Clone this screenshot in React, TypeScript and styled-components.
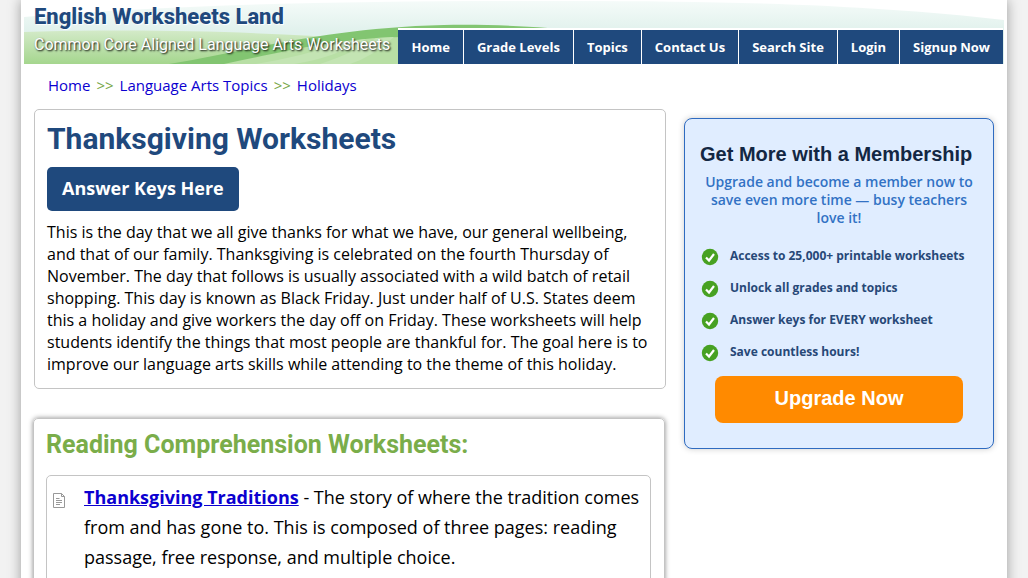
import React from "react";
import styled, { createGlobalStyle } from "styled-components";

const GlobalStyle = createGlobalStyle`
  *, *::before, *::after { box-sizing: border-box; }
  body {
    margin: 0;
    background: #f2f2f2;
    color: #000;
    font-family: "Open Sans", "Noto Sans", sans-serif;
    font-size: 16px;
  }
  h1, h2, h3, p, ul, ol { margin: 0; padding: 0; }
  ul, ol { list-style: none; }
`;

const Page = styled.div`
  margin: 0 21px;
  padding: 0 3px 40px;
  min-height: 100vh;
  background: #fff;
  box-shadow: 0 0 12px rgba(0, 0, 0, 0.36);
`;

const Header = styled.header`
  position: relative;
  display: flex;
  justify-content: space-between;
  height: 64px;
  overflow: hidden;
`;

const HeaderArt = styled.svg`
  position: absolute;
  inset: 0;
  width: 100%;
  height: 64px;
`;

const Brand = styled.div`
  position: relative;
  padding: 3px 0 0 10px;
  font-family: Roboto, sans-serif;
  white-space: nowrap;
`;

const SiteName = styled.div`
  color: #1f497d;
  font-size: 22px;
  font-weight: 800;
  line-height: 28px;
  text-shadow: 1px 1px 1px #fff;
`;

const Tagline = styled.div`
  color: #fff;
  font-size: 16px;
  line-height: 28px;
  text-shadow: 1px 1px 2px #000;
`;

const Nav = styled.nav`
  position: relative;
  align-self: flex-end;
  margin-right: 1px;
  border-top: 2px solid #fff;
  background: #fff;
`;

const NavList = styled.ul`
  display: flex;
  gap: 1px;
`;

const NavLink = styled.a`
  display: block;
  padding: 0 13px;
  background: #1f497d;
  color: #fff;
  font-size: 13px;
  font-weight: 700;
  line-height: 34px;
  text-decoration: none;
  white-space: nowrap;
`;

const Breadcrumb = styled.nav`
  display: flex;
  gap: 6px;
  padding: 10px 24px 12px;
  color: #76a646;
  font-size: 15px;
  line-height: 22px;
`;

const CrumbLink = styled.a`
  color: #0b00d0;
  text-decoration: none;
`;

const Columns = styled.div`
  display: grid;
  grid-template-columns: minmax(0, 1fr) 310px;
  align-items: start;
  gap: 18px;
  padding: 1px 10px 0;
`;

const Main = styled.main`
  display: grid;
  gap: 29px;
`;

const Card = styled.section<{ $raised?: boolean }>`
  margin: ${(p) => (p.$raised ? "0 1px 0 -1px" : "0")};
  padding: ${(p) => (p.$raised ? "9px 13px 14px 12px" : "12px 12px 13px")};
  border: 1px solid #c4c4c4;
  border-radius: 5px;
  box-shadow: ${(p) => (p.$raised ? "0 0 5px rgba(0, 0, 0, 0.45)" : "none")};
`;

const Title = styled.h1`
  color: #1f497d;
  font-family: Roboto, sans-serif;
  font-size: 30px;
  line-height: 34px;
`;

const KeysButton = styled.button`
  display: block;
  margin: 11px 0 10px;
  padding: 0 15px 2px;
  border: 0;
  border-radius: 5px;
  background: #1f497d;
  color: #fff;
  font: 700 18px/42px "Open Sans", sans-serif;
  cursor: pointer;
`;

const Intro = styled.p`
  line-height: 22px;
`;

const SectionTitle = styled.h2`
  color: #7aad4a;
  font-family: Roboto, sans-serif;
  font-size: 25px;
  line-height: 34px;
`;

const Worksheets = styled.ul`
  margin-top: 13px;
`;

const Worksheet = styled.li`
  display: flex;
  gap: 19px;
  padding: 6px 8px 12px 6px;
  border: 1px solid #c4c4c4;
  border-radius: 5px;
  font-size: 18px;
  line-height: 30px;

  svg {
    flex: none;
    margin-top: 11px;
  }
`;

const WorksheetLink = styled.a`
  color: #0b00d0;
  font-weight: 700;
`;

const Membership = styled.aside`
  margin-top: 9px;
  padding: 21px 15px 25px;
  border: 1px solid #2f6bc0;
  border-radius: 8px;
  background: #e0edff;
  box-shadow: 0 0 6px rgba(0, 0, 0, 0.2);
`;

const MembershipTitle = styled.h2`
  color: #132743;
  font: 700 20px/28px "Liberation Sans", Arial, sans-serif;
  white-space: nowrap;
`;

const MembershipText = styled.p`
  margin: 5px 0 13px;
  color: #3272c4;
  font-size: 14px;
  font-weight: 600;
  line-height: 18px;
  text-align: center;
`;

const Benefit = styled.li`
  display: flex;
  gap: 11px;
  padding-left: 1px;
  color: #274877;
  font-size: 12px;
  font-weight: 700;
  line-height: 32px;

  svg {
    flex: none;
    margin-top: 8px;
  }
`;

const UpgradeButton = styled.button`
  display: block;
  width: 248px;
  margin: 8px auto 0;
  padding: 0 0 3px;
  border: 0;
  border-radius: 8px;
  background: #ff8a00;
  color: #fff;
  font: 700 20px/44px "Liberation Sans", Arial, sans-serif;
  cursor: pointer;
`;

const navItems = ["Home", "Grade Levels", "Topics", "Contact Us", "Search Site", "Login", "Signup Now"];
const benefits = [
  "Access to 25,000+ printable worksheets",
  "Unlock all grades and topics",
  "Answer keys for EVERY worksheet",
  "Save countless hours!",
];

const Waves = () => (
  <HeaderArt viewBox="0 0 980 64" preserveAspectRatio="none" aria-hidden="true">
    <defs>
      <linearGradient id="mist" x1="0" y1="0" x2="0" y2="1">
        <stop offset="0" stopColor="#f5fbf9" />
        <stop offset="0.5" stopColor="#e0f1ec" />
      </linearGradient>
      <linearGradient id="meadow" x1="0" y1="0" x2="0" y2="1">
        <stop offset="0" stopColor="#d3eac8" />
        <stop offset="1" stopColor="#a5d68e" />
      </linearGradient>
    </defs>
    <path d="M0 17C150 5 300 1 500 1C700 0 850 5 980 20V64H0Z" fill="url(#mist)" />
    <path d="M0 32C110 29 200 31 290 36L380 40V64H0Z" fill="url(#meadow)" />
    <path d="M145 64C230 50 300 28 420 25C470 24 520 27 560 31V64Z" fill="#82c571" />
    <path d="M200 64C260 52 310 38 380 37V64Z" fill="#b8dfa5" />
    <path
      d="M232 64Q280 56 320 42L342 39Q310 58 270 64ZM296 64Q332 52 352 38L370 37Q348 57 326 64Z"
      fill="#c3e4b3"
    />
  </HeaderArt>
);

const PageIcon = () => (
  <svg width="12" height="15" viewBox="0 0 12 15" fill="none" stroke="#999" aria-hidden="true">
    <path d="M.5.5H8.5L11.5 3.5V14.5H.5ZM8.5.5V3.5H11.5M3 5.5H6.5M3 7.5H9M3 9.5H9M3 11.5H7" />
  </svg>
);

const CheckIcon = () => (
  <svg width="18" height="18" viewBox="0 0 18 18" aria-hidden="true">
    <circle cx="9" cy="9" r="8.2" fill="#47a122" />
    <path d="M5 9.5L8 12.5L13 6" fill="none" stroke="#fff" strokeWidth="2.2" />
  </svg>
);

export default function App() {
  return (
    <>
      <GlobalStyle />
      <Page>
        <Header>
          <Waves />
          <Brand>
            <SiteName>English Worksheets Land</SiteName>
            <Tagline>Common Core Aligned Language Arts Worksheets</Tagline>
          </Brand>
          <Nav aria-label="Main">
            <NavList>
              {navItems.map((item) => (
                <li key={item}>
                  <NavLink href="#">{item}</NavLink>
                </li>
              ))}
            </NavList>
          </Nav>
        </Header>
        <Breadcrumb aria-label="Breadcrumb">
          <CrumbLink href="#">Home</CrumbLink>
          <span>&gt;&gt;</span>
          <CrumbLink href="#">Language Arts Topics</CrumbLink>
          <span>&gt;&gt;</span>
          <CrumbLink href="#">Holidays</CrumbLink>
        </Breadcrumb>
        <Columns>
          <Main>
            <Card>
              <Title>Thanksgiving Worksheets</Title>
              <KeysButton type="button">Answer Keys Here</KeysButton>
              <Intro>
                This is the day that we all give thanks for what we have, our general wellbeing, and that of our
                family. Thanksgiving is celebrated on the fourth Thursday of November. The day that follows is usually
                associated with a wild batch of retail shopping. This day is known as Black Friday. Just under half of
                U.S. States deem this a holiday and give workers the day off on Friday. These worksheets will help
                students identify the things that most people are thankful for. The goal here is to improve our
                language arts skills while attending to the theme of this holiday.
              </Intro>
            </Card>
            <Card $raised>
              <SectionTitle>Reading Comprehension Worksheets:</SectionTitle>
              <Worksheets>
                <Worksheet>
                  <PageIcon />
                  <p>
                    <WorksheetLink href="#">Thanksgiving Traditions</WorksheetLink> - The story of where the tradition
                    comes from and has gone to. This is composed of three pages: reading passage, free response, and
                    multiple choice.
                  </p>
                </Worksheet>
              </Worksheets>
            </Card>
          </Main>
          <Membership>
            <MembershipTitle>Get More with a Membership</MembershipTitle>
            <MembershipText>Upgrade and become a member now to save even more time — busy teachers love it!</MembershipText>
            <ul>
              {benefits.map((benefit) => (
                <Benefit key={benefit}>
                  <CheckIcon />
                  {benefit}
                </Benefit>
              ))}
            </ul>
            <UpgradeButton type="button">Upgrade Now</UpgradeButton>
          </Membership>
        </Columns>
      </Page>
    </>
  );
}
